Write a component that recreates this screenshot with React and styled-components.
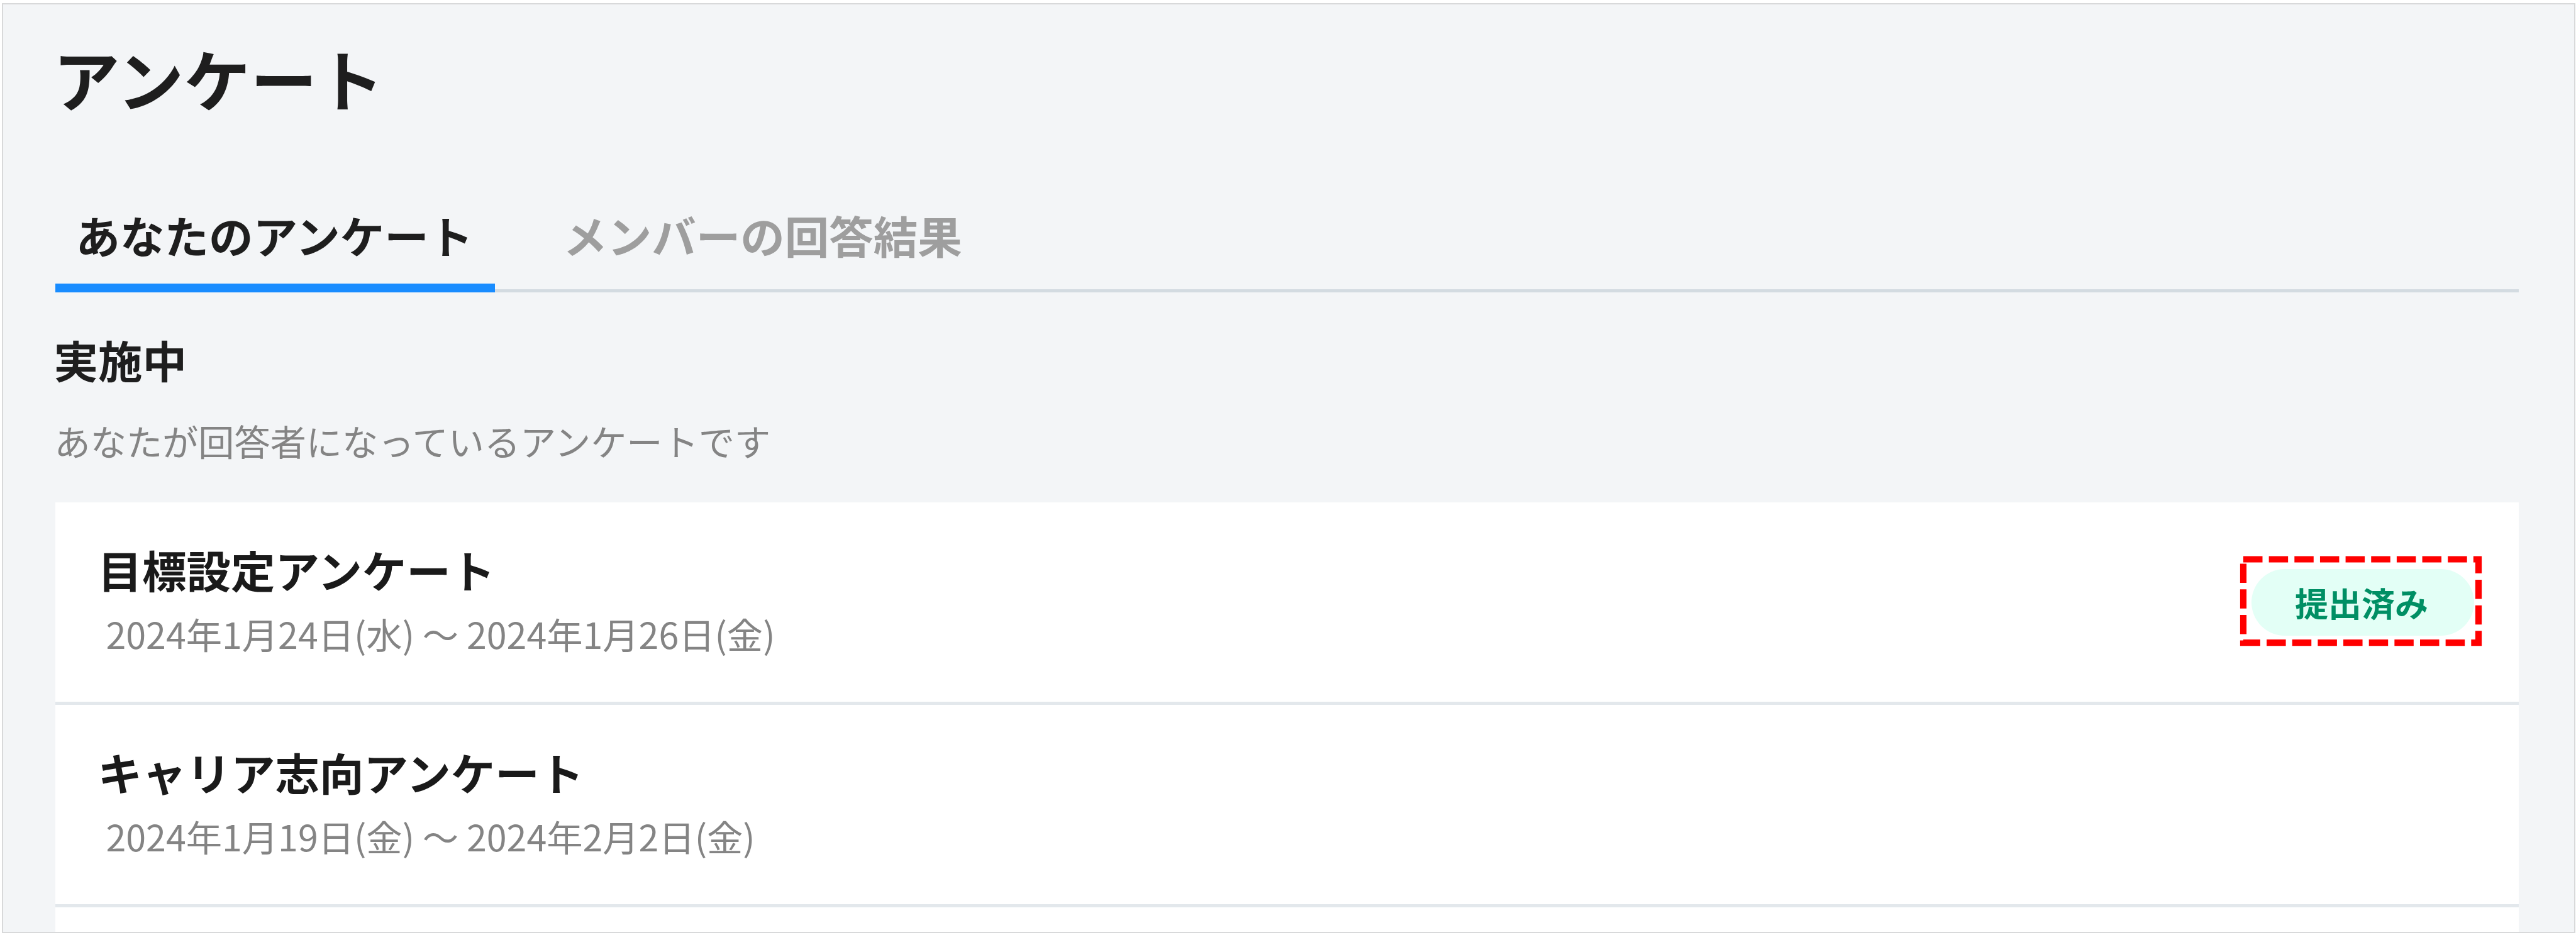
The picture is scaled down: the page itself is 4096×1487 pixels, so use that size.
import React from 'react'
import styled, { createGlobalStyle } from 'styled-components'

const GlobalStyle = createGlobalStyle`
*{
box-sizing:border-box;
margin:0;
padding:0;
}
body{
background-color:#ffffff;
font-family:"Noto Sans CJK JP", sans-serif;
overflow:hidden;
}`
const Container = styled.div`
width:4092px;
height:1479px;
margin:5px 1px 0 3px;
border:2px solid #d8d9da;
background-color:#f3f5f7;
padding:54px 88px 0 82.5px;
overflow:hidden;`
const Title = styled.h1`
margin-left:-3px;
font-size:106px;
font-weight:700;
line-height:124px;
color:#1e1e1e;`
const Tabs = styled.div`
display:flex;
gap:75px;
height:178px;
margin-top:102px;
border-bottom:5px solid #d3dbe1;`
const Tab = styled.div`
height:178px;
padding:43px 35px 0 33px;
font-size:70.5px;
font-weight:700;
line-height:86px;
white-space:nowrap;
color:${props => props.$active ? '#1e1e1e' : '#9e9e9e'};
border-bottom:14px solid ${props => props.$active ? '#188cff' : 'transparent'};`
const Heading = styled.h2`
margin:63px 0 0 -2px;
font-size:70.5px;
font-weight:700;
line-height:86px;
color:#1e1e1e;`
const Desc = styled.p`
margin:49px 0 0 -1px;
font-size:57.2px;
line-height:74px;
color:#848484;`
const List = styled.div`
margin-top:62px;
background-color:#ffffff;`
const Row = styled.div`
display:flex;
align-items:center;
justify-content:space-between;
height:322px;
padding:0 71px 0 68px;
border-bottom:5px solid #e3e8ec;`
const Info = styled.div`
display:flex;
flex-direction:column;
gap:23px;
padding-top:63px;
height:100%;`
const Name = styled.h3`
font-size:70.5px;
font-weight:700;
line-height:86px;
color:#1a1a1a;`
const Period = styled.p`
padding-left:13px;
font-size:57.3px;
line-height:74px;
color:#848484;`
const Badge = styled.div`
position:relative;
width:354px;
height:106px;
border-radius:53px;
padding-right:4px;
display:flex;
align-items:center;
justify-content:center;
background-color:#e3fff6;
color:#008f64;
font-size:53px;
font-weight:700;
line-height:76px;`
const Highlight = styled.svg`
position:absolute;
left:-19px;
top:-21px;
width:386px;
height:144px;
fill:none;
stroke:#ff0000;`

const surveys = [
    { name: '目標設定アンケート', period: '2024年1月24日(水) 〜 2024年1月26日(金)', status: '提出済み' },
    { name: 'キャリア志向アンケート', period: '2024年1月19日(金) 〜 2024年2月2日(金)' },
]

const App = () => {
    return (
        <>
            <GlobalStyle/>
            <Container lang="ja">
                <Title>アンケート</Title>
                <Tabs>
                    <Tab $active>あなたのアンケート</Tab>
                    <Tab>メンバーの回答結果</Tab>
                </Tabs>
                <Heading>実施中</Heading>
                <Desc>あなたが回答者になっているアンケートです</Desc>
                <List>
                    {surveys.map(survey => (
                        <Row key={survey.name}>
                            <Info>
                                <Name>{survey.name}</Name>
                                <Period>{survey.period}</Period>
                            </Info>
                            {survey.status && (
                                <Badge>
                                    {survey.status}
                                    <Highlight viewBox="0 0 386 144">
                                        <rect x="6" y="5.5" width="374" height="132.6" strokeWidth="10.2" strokeDasharray="30.5 10.15"/>
                                    </Highlight>
                                </Badge>
                            )}
                        </Row>
                    ))}
                    <Row/>
                </List>
            </Container>
        </>
    )
}
export default App;
